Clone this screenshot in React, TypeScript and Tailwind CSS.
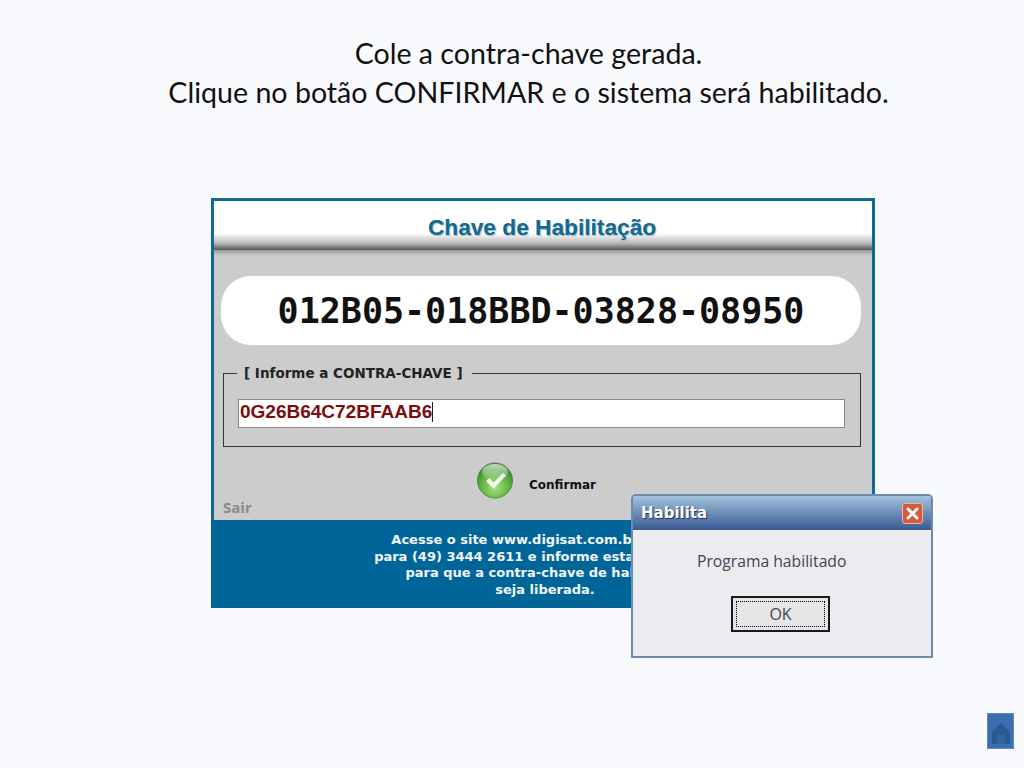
function CheckIcon() {
  return (
    <svg width="36" height="37" viewBox="0 0 36 37">
      <defs>
        <radialGradient id="ball" cx="50%" cy="70%" r="65%">
          <stop offset="0%" stopColor="#a8e27a" />
          <stop offset="60%" stopColor="#62b544" />
          <stop offset="100%" stopColor="#33812b" />
        </radialGradient>
        <linearGradient id="shine" x1="0" y1="0" x2="0" y2="1">
          <stop offset="0%" stopColor="#ffffff" stopOpacity="0.7" />
          <stop offset="100%" stopColor="#ffffff" stopOpacity="0.05" />
        </linearGradient>
      </defs>
      <circle cx="18" cy="18.5" r="17.5" fill="url(#ball)" stroke="#4a8f45" strokeWidth="1" />
      <ellipse cx="18" cy="10" rx="13" ry="8" fill="url(#shine)" />
      <path d="M9 19l3.5-3 4 4.5L26 11l3 2.5L16.5 27z" fill="#f2f8ee" />
    </svg>
  );
}

function CloseIcon() {
  return (
    <div className="flex h-[21px] w-[21px] items-center justify-center rounded-[3px] border border-[#e8b9a8] bg-[#d8593a]">
      <svg width="13" height="13" viewBox="0 0 13 13">
        <path d="M2 2l9 9M11 2l-9 9" stroke="#ffffff" strokeWidth="3" strokeLinecap="round" />
      </svg>
    </div>
  );
}

function HomeIcon() {
  return (
    <svg width="22" height="26" viewBox="0 0 22 26">
      <path d="M11 3L2 12v12h18V12z" fill="#2a5890" />
      <rect x="7" y="15" width="8" height="9" fill="#3265a3" />
    </svg>
  );
}

function Dialog() {
  return (
    <div className="absolute left-[420px] top-[296px] flex h-[164px] w-[302px] flex-col overflow-hidden rounded-t-[5px] border-2 border-[#6c8cb0] bg-[#ecebf0]">
      <div className="flex h-[34px] items-center justify-between bg-gradient-to-b from-[#a3c3de] to-[#3c5a94] pl-2 pr-2">
        <span className="font-['DejaVu_Sans'] text-[15px] font-bold text-white [text-shadow:1px_1px_1px_#1c2f5c]">
          Habilita
        </span>
        <CloseIcon />
      </div>
      <div className="flex flex-1 flex-col items-start pt-[21px]">
        <p className="ml-[64px] font-['Open_Sans'] text-[15.7px] leading-5 text-[#444452]">Programa habilitado</p>
        <button className="ml-[98px] mt-[25px] flex h-[36px] w-[99px] items-center justify-center border-2 border-[#1a1a1a] bg-[#e6e5e8] p-[3px]">
          <span className="flex h-full w-full items-center justify-center border border-dotted border-black font-['Open_Sans'] text-[16px] text-[#444452]">
            OK
          </span>
        </button>
      </div>
    </div>
  );
}

function KeyPanel() {
  return (
    <div className="relative ml-[211px] mt-[86px] w-[664px]">
      <div className="flex h-[410px] flex-col border-x-[3px] border-t-[3px] border-[#0f6a96] bg-[#cccccc]">
        <div className="flex h-[49px] items-start justify-center bg-[linear-gradient(#ffffff_0%,#ffffff_66%,#b8b8b8_86%,#555555_100%)] pr-[2px] pt-[13px]">
          <h1 className="font-['Liberation_Sans'] text-[22.7px] font-bold leading-[26px] text-[#0f6a94] [text-shadow:1px_1px_1px_#9fb4c0]">
            Chave de Habilitação
          </h1>
        </div>
        <div className="h-[6px] bg-gradient-to-b from-[#9a9a9a] to-[#cccccc]" />

        <div className="ml-[7px] mr-[11px] mt-5 flex h-[69px] items-center justify-center rounded-[30px] bg-white pt-[2px]">
          <span className="font-['DejaVu_Sans_Mono'] text-[35px] font-bold leading-none text-[#111111]">
            012B05-018BBD-03828-08950
          </span>
        </div>

        <fieldset className="ml-[9px] mt-[20px] h-[82px] w-[638px] border border-[#333333] px-[14px]">
          <legend className="-ml-[1px] pl-[7px] pr-[9px] font-['DejaVu_Sans'] text-[13.5px] font-bold leading-4 text-[#222222]">
            [ Informe a CONTRA-CHAVE ]
          </legend>
          <div className="mt-[18px] flex h-[29px] w-[607px] items-center border border-[#8a8a8a] bg-white pb-[3px] pl-[1px]">
            <span className="border-r border-[#222222] font-['Liberation_Sans'] text-[19px] font-bold leading-5 text-[#7d0d0d]">
              0G26B64C72BFAAB6
            </span>
          </div>
        </fieldset>

        <div className="mt-[15px] flex items-center pl-[263px]">
          <CheckIcon />
          <span className="ml-[16px] mt-[9px] font-['DejaVu_Sans'] text-[12px] font-bold text-[#111111]">
            Confirmar
          </span>
        </div>
        <p className="ml-[9px] -mt-[1px] font-['Open_Sans'] text-[15px] font-bold leading-[18px] text-[#8a8a8a]">
          Sair
        </p>

        <div className="-mx-[3px] mt-auto flex h-[88px] flex-col items-center bg-[#006699] pr-[2px] pt-[12px] font-['DejaVu_Sans'] text-[13px] font-bold leading-[16.7px] text-[#f2f6fa]">
          <span className="ml-[12px]">Acesse o site www.digisat.com.br, ou ligue</span>
          <span className="mr-[28px]">para (49) 3444 2611 e informe esta chave</span>
          <span className="ml-[14px]">para que a contra-chave de habilitação</span>
          <span className="ml-[6px]">seja liberada.</span>
        </div>
      </div>
      <Dialog />
    </div>
  );
}

export default function App() {
  return (
    <div className="flex h-[768px] w-[1024px] flex-col overflow-hidden bg-[#f8fafd]">
      <div className="pl-[33px] pt-[34px] text-center font-['Lato'] text-[28.6px] leading-[39px] text-[#111111]">
        <p>Cole a contra-chave gerada.</p>
        <p>Clique no botão CONFIRMAR e o sistema será habilitado.</p>
      </div>
      <KeyPanel />
      <div className="mr-[10px] mt-auto mb-[19px] flex h-[36px] w-[27px] items-end justify-center self-end border border-[#5a8ac4] bg-[#3b6db0] pb-[2px]">
        <HomeIcon />
      </div>
    </div>
  );
}
